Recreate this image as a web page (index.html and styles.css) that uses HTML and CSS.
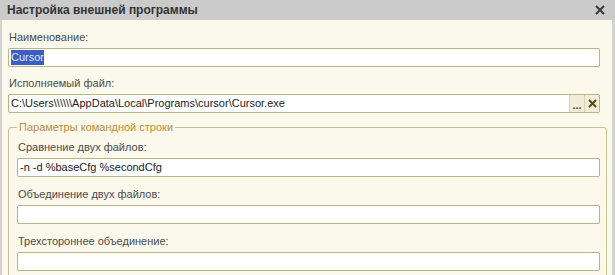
FILE: index.html
```html
<!DOCTYPE html>
<html lang="ru">
<head>
<meta charset="utf-8">
<title>Настройка внешней программы</title>
<link rel="stylesheet" href="styles.css">
</head>
<body>
<div class="window">
  <div class="titlebar">
    <span class="title">Настройка внешней программы</span>
    <svg class="close" width="10" height="10" viewBox="0 0 10 10"><path d="M1 1L9 9M9 1L1 9" stroke="#3c3c3c" stroke-width="2" fill="none"/></svg>
  </div>
  <div class="content">
    <div class="field top">
      <div class="label">Наименование:</div>
      <div class="input"><span class="text"><span class="sel">Cursor</span></span></div>
    </div>
    <div class="field top last">
      <div class="label">Исполняемый файл:</div>
      <div class="input">
        <span class="text">C:\Users\\\\\\AppData\Local\Programs\cursor\Cursor.exe</span>
        <span class="btn dots">...</span>
        <span class="btn clear"><svg width="9" height="9" viewBox="0 0 9 9"><path d="M1 1L8 8M8 1L1 8" stroke="#5b4a12" stroke-width="2" fill="none"/></svg></span>
      </div>
    </div>
    <fieldset class="group">
      <legend>Параметры командной строки</legend>
      <div class="field">
        <div class="label">Сравнение двух файлов:</div>
        <div class="input"><span class="text">-n -d %baseCfg %secondCfg</span></div>
      </div>
      <div class="field">
        <div class="label">Объединение двух файлов:</div>
        <div class="input"><span class="text"></span></div>
      </div>
      <div class="field">
        <div class="label">Трехстороннее объединение:</div>
        <div class="input"><span class="text"></span></div>
      </div>
    </fieldset>
  </div>
</div>
</body>
</html>
```

FILE: styles.css
```css
html, body {
  margin: 0;
  padding: 0;
}
body {
  font-family: "Liberation Sans", Arial, sans-serif;
  font-size: 11px;
  background: #fbf9eb;
}
.window {
  width: 615px;
  height: 275px;
  overflow: hidden;
  display: flex;
  flex-direction: column;
}
.titlebar {
  height: 20px;
  flex: none;
  background: #cbcbcb;
  display: flex;
  align-items: center;
  justify-content: space-between;
  padding: 0 10px 0 7px;
}
.title {
  font-weight: bold;
  font-size: 12px;
  color: #333333;
}
.close {
  display: block;
}
.content {
  flex: 1;
  background: #fbf9eb;
  border-left: 2px solid #d2d2d2;
  border-right: 3px solid #d2d2d2;
  padding: 10px 5px 0 6px;
}
.field {
  display: flex;
  flex-direction: column;
  gap: 4px;
  margin-bottom: 10px;
}
.field.top {
  margin-right: 7px;
  margin-bottom: 9px;
}
.field.top.last {
  margin-bottom: 7px;
}
.label {
  height: 14px;
  line-height: 14px;
  color: #4b4b4b;
  padding-left: 1px;
}
.input {
  height: 17px;
  border: 1px solid #bab38b;
  border-radius: 2px;
  background: #ffffff;
  display: flex;
  align-items: stretch;
}
.text {
  flex: 1;
  font-size: 11px;
  line-height: 17px;
  padding-left: 2px;
  color: #222222;
  white-space: nowrap;
  overflow: hidden;
}
.sel {
  background: #3a5fbf;
  color: #dfe8ff;
  display: inline-block;
  line-height: 15px;
  vertical-align: top;
  margin-top: 1px;
}
.btn {
  width: 15px;
  flex: none;
  display: flex;
  align-items: center;
  justify-content: center;
  background: #f1edd8;
  border-left: 1px solid #d9d3b2;
}
.dots {
  color: #5b4a12;
  font-weight: bold;
  font-size: 11px;
  line-height: 1;
  padding-top: 3px;
  box-sizing: border-box;
}
.clear {
  width: 14px;
}
.group {
  margin: 0;
  padding: 6px 6px 0 8px;
  border: 1px solid #c9c192;
  border-radius: 3px;
}
.group legend {
  color: #c38c35;
  line-height: 14px;
  padding: 0 2px;
}
```
